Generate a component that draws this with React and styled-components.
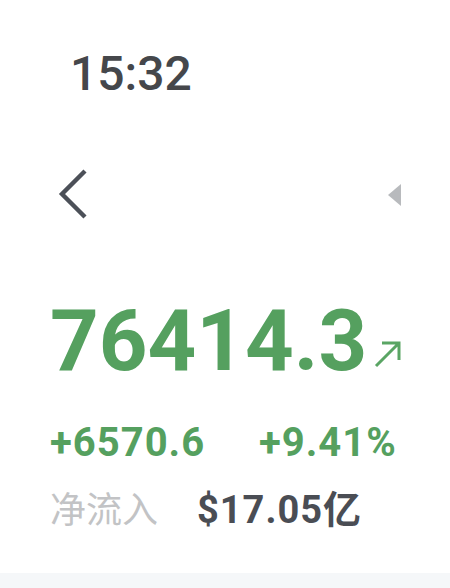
import React from "react";
import styled, { createGlobalStyle } from "styled-components";

const Global = createGlobalStyle`
  html, body { margin: 0; padding: 0; background: #ffffff; }
  body { font-family: Roboto, "Noto Sans CJK SC", sans-serif; }
`;

const Screen = styled.div`
  width: 450px;
  height: 588px;
  display: flex;
  flex-direction: column;
  background: #ffffff;
  overflow: hidden;
`;

const StatusBar = styled.div`
  height: 110px;
  box-sizing: border-box;
  padding: 50px 0 0 70px;
  font-size: 48px;
  line-height: 48px;
  font-weight: 500;
  color: #45474b;
`;

const NavBar = styled.div`
  margin-top: 55px;
  height: 60px;
  display: flex;
  align-items: center;
  justify-content: space-between;
  padding: 0 48px 0 56px;
`;

const Quote = styled.div`
  padding-left: 50px;
  display: flex;
  flex-direction: column;
`;

const PriceRow = styled.div`
  margin-top: 66px;
  display: flex;
  align-items: flex-end;
  gap: 6px;
`;

const Price = styled.div`
  font-size: 85px;
  line-height: 100px;
  font-weight: 700;
  color: #55a05f;
`;

const ArrowWrap = styled.div`
  padding-bottom: 22px;
  display: flex;
`;

const ChangeRow = styled.div`
  margin-top: 30px;
  display: flex;
  font-size: 40px;
  line-height: 44px;
  font-weight: 700;
  letter-spacing: 1px;
  color: #55a05f;
`;

const ChangeValue = styled.span`
  width: ${(p) => p.$w}px;
`;

const FlowRow = styled.div`
  margin-top: 20px;
  display: flex;
  align-items: baseline;
  line-height: 44px;
`;

const FlowLabel = styled.span`
  width: 147px;
  font-size: 36px;
  color: #c2c3c5;
  font-weight: 400;
  font-family: "Noto Sans CJK SC", sans-serif;
`;

const FlowValue = styled.span`
  font-size: 38px;
  color: #4a4d54;
  font-weight: 700;
  letter-spacing: 1px;
  font-family: Roboto, "Noto Sans CJK SC", sans-serif;
`;

const Spacer = styled.div`
  flex: 1;
`;

const BottomStrip = styled.div`
  height: 15px;
  background: #f5f7f9;
`;

export default function App() {
  return (
    <>
      <Global />
      <Screen>
        <StatusBar>15:32</StatusBar>
        <NavBar>
          <svg width="34" height="54" viewBox="0 0 34 54">
            <path d="M29 3 L6 26 L29 49" fill="none" stroke="#4c5058" strokeWidth="4.4" />
          </svg>
          <svg width="14" height="24" viewBox="0 0 14 24">
            <path d="M13 1 L0 12 L13 23 Z" fill="#b8babd" />
          </svg>
        </NavBar>
        <Quote>
          <PriceRow>
            <Price>76414.3</Price>
            <ArrowWrap>
              <svg width="30" height="30" viewBox="0 0 30 30">
                <path d="M3 27 L26 4 M9 4 L26 4 L26 21" fill="none" stroke="#5aa564" strokeWidth="3" />
              </svg>
            </ArrowWrap>
          </PriceRow>
          <ChangeRow>
            <ChangeValue $w={209}>+6570.6</ChangeValue>
            <ChangeValue>+9.41%</ChangeValue>
          </ChangeRow>
          <FlowRow>
            <FlowLabel>净流入</FlowLabel>
            <FlowValue>$17.05亿</FlowValue>
          </FlowRow>
        </Quote>
        <Spacer />
        <BottomStrip />
      </Screen>
    </>
  );
}
